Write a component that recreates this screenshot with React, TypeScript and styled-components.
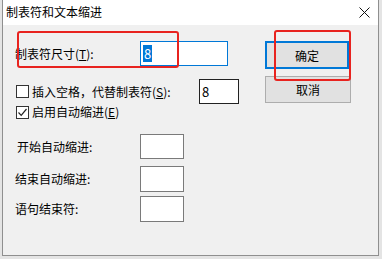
import React from "react";
import styled, { createGlobalStyle } from "styled-components";

const Global = createGlobalStyle`
  html, body { margin: 0; padding: 0; background: #e4e4e4; }
  body { width: 382px; height: 259px; overflow: hidden; font-family: "Noto Sans CJK SC", "Microsoft YaHei", sans-serif; }
`;

const Stage = styled.div`
  padding-left: 2px;
  width: 382px;
  height: 259px;
  box-sizing: border-box;
`;

const Dialog = styled.div`
  position: relative;
  width: 377px;
  height: 256px;
  box-sizing: border-box;
  border: 1px solid #8f8f8f;
  border-top: none;
  background: #f0f0f0;
  display: flex;
  flex-direction: column;
`;

const TitleBar = styled.div`
  height: 25px;
  background: #ffffff;
  display: flex;
  align-items: center;
  justify-content: space-between;
  padding: 0 8px 0 3px;
  flex-shrink: 0;
`;

const Title = styled.span`
  font-size: 12px;
  color: #000;
  line-height: 1;
  margin-top: -1px;
`;

const Body = styled.div`
  flex: 1;
  display: flex;
  padding: 16px 0 0 12px;
`;

const LeftCol = styled.div`
  width: 250px;
  display: flex;
  flex-direction: column;
`;

const Row = styled.div<{ $h: number; $mt?: number }>`
  height: ${(p) => p.$h}px;
  margin-top: ${(p) => p.$mt ?? 0}px;
  display: flex;
  align-items: center;
`;

const Label = styled.span<{ $w?: number; $ml?: number }>`
  font-size: 12px;
  color: #000;
  white-space: nowrap;
  ${(p) => (p.$w ? `width: ${p.$w}px;` : "")}
  margin-left: ${(p) => p.$ml ?? 0}px;
  flex-shrink: 0;
  line-height: 1;
`;

const Field = styled.div<{ $w: number; $h: number; $border: string }>`
  width: ${(p) => p.$w}px;
  height: ${(p) => p.$h}px;
  box-sizing: border-box;
  border: 1px solid ${(p) => p.$border};
  background: #fff;
  display: flex;
  align-items: center;
  padding-left: 2px;
  font-family: "Noto Sans CJK SC", sans-serif;
  font-size: 13px;
  color: #000;
  flex-shrink: 0;
`;

const Selected = styled.span`
  background: #0078d7;
  color: #fff;
  line-height: 17px;
  padding: 0 1px;
`;

const Check = styled.div`
  width: 13px;
  height: 13px;
  box-sizing: border-box;
  border: 1px solid #333;
  background: #fff;
  margin-left: 1px;
  margin-right: 3px;
  flex-shrink: 0;
  display: flex;
  align-items: center;
  justify-content: center;
`;

const RightCol = styled.div`
  display: flex;
  flex-direction: column;
`;

const Button = styled.div<{ $primary?: boolean; $h: number; $mt?: number }>`
  width: ${(p) => (p.$primary ? 84 : 86)}px;
  height: ${(p) => p.$h}px;
  margin-top: ${(p) => p.$mt ?? 0}px;
  box-sizing: border-box;
  border: ${(p) => (p.$primary ? "2px solid #0078d7" : "1px solid #adadad")};
  background: #e1e1e1;
  display: flex;
  align-items: center;
  justify-content: center;
  font-size: 12px;
  color: #000;
`;

const Highlight = styled.div<{ $l: number; $t: number; $w: number; $h: number }>`
  position: absolute;
  left: ${(p) => p.$l}px;
  top: ${(p) => p.$t}px;
  width: ${(p) => p.$w}px;
  height: ${(p) => p.$h}px;
  box-sizing: border-box;
  border: 2.5px solid #e8231f;
  border-radius: 3px;
  pointer-events: none;
`;

const U = styled.span`
  text-decoration: underline;
  text-underline-offset: 1px;
`;

const CloseIcon = () => (
  <svg width="11" height="11" viewBox="0 0 11 11">
    <path d="M0.5 0.5 L10.5 10.5 M10.5 0.5 L0.5 10.5" stroke="#111" strokeWidth="1" />
  </svg>
);

const CheckMark = () => (
  <svg width="11" height="11" viewBox="0 0 11 11">
    <path d="M1.5 5.5 L4.2 8.3 L9.5 2" stroke="#222" strokeWidth="1.2" fill="none" />
  </svg>
);

export default function App() {
  return (
    <>
      <Global />
      <Stage>
        <Dialog>
          <TitleBar>
            <Title>制表符和文本缩进</Title>
            <CloseIcon />
          </TitleBar>
          <Body>
            <LeftCol>
              <Row $h={25}>
                <Label $w={125}>
                  制表符尺寸(<U>T</U>):
                </Label>
                <Field $w={88} $h={25} $border="#0078d7">
                  <Selected>8</Selected>
                </Field>
              </Row>
              <Row $h={25} $mt={13}>
                <Check />
                <Label $w={167}>
                  插入空格，代替制表符(<U>S</U>):
                </Label>
                <Field $w={40} $h={25} $border="#222">
                  8
                </Field>
              </Row>
              <Row $h={14} $mt={1}>
                <Check>
                  <CheckMark />
                </Check>
                <Label>
                  启用自动缩进(<U>E</U>)
                </Label>
              </Row>
              <Row $h={25} $mt={15}>
                <Label $w={123} $ml={2}>开始自动缩进:</Label>
                <Field $w={44} $h={25} $border="#7a7a7a" />
              </Row>
              <Row $h={26} $mt={7}>
                <Label $w={125}>结束自动缩进:</Label>
                <Field $w={44} $h={26} $border="#7a7a7a" />
              </Row>
              <Row $h={26} $mt={4}>
                <Label $w={125}>语句结束符:</Label>
                <Field $w={44} $h={26} $border="#7a7a7a" />
              </Row>
            </LeftCol>
            <RightCol>
              <Button $primary $h={28}>确定</Button>
              <Button $h={27} $mt={7}>取消</Button>
            </RightCol>
          </Body>
          <Highlight $l={14} $t={31} $w={162} $h={37} />
          <Highlight $l={271} $t={30} $w={77} $h={51} />
        </Dialog>
      </Stage>
    </>
  );
}
